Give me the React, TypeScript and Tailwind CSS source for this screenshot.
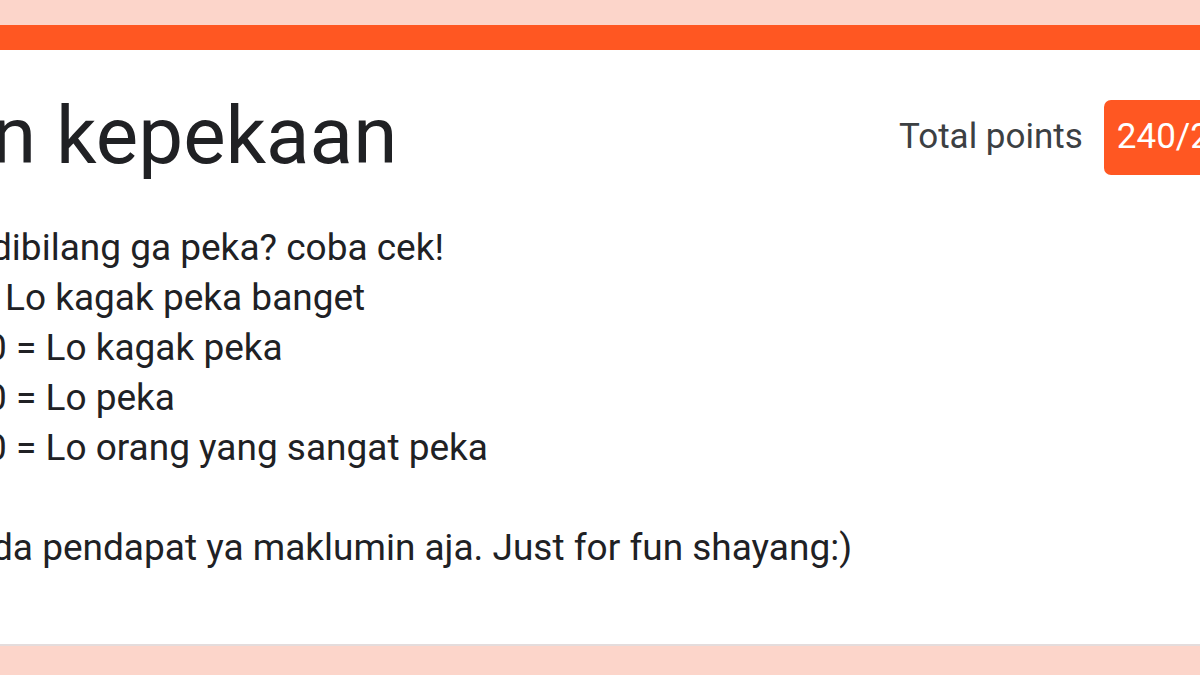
import React from 'react';

export default function App() {
  return (
    <div className="h-[675px] w-[1200px] overflow-hidden bg-[#fcd5ca] pt-[25px] font-['Roboto',sans-serif]">
      {/* Accent bar */}
      <div className="h-[25px] bg-[#ff5722]" />

      {/* Form header card */}
      <div className="flex h-[596px] overflow-hidden border-b-2 border-[#e4dcdc] bg-white">
        <div className="w-[899px] shrink-0">
          <h1 className="ml-[-8px] mt-[38px] whitespace-nowrap text-[80px] font-normal leading-[96px] text-[#202124]">
            n kepekaan
          </h1>

          <div className="mt-[39px] whitespace-nowrap text-[37px] leading-[50px] text-[#202124]">
            <div className="ml-[-9px]">dibilang ga peka? coba cek!</div>
            <div className="ml-[5px]">Lo kagak peka banget</div>
            <div className="ml-[-14px]">0 = Lo kagak peka</div>
            <div className="ml-[-14px]">0 = Lo peka</div>
            <div className="ml-[-14px]">0 = Lo orang yang sangat peka</div>
            <div className="h-[50px]" />
            <div className="ml-[-8px]">da pendapat ya maklumin aja. Just for fun shayang:)</div>
          </div>
        </div>

        <div className="mt-[50px] flex h-[75px] shrink-0 items-center">
          <span className="whitespace-nowrap text-[35px] text-[#3c4043]">Total points</span>
          <div className="ml-[21px] flex h-[75px] items-center rounded-[7px] bg-[#ff5722] px-[13px] text-[35px] text-white">
            240/240
          </div>
        </div>
      </div>
    </div>
  );
}
